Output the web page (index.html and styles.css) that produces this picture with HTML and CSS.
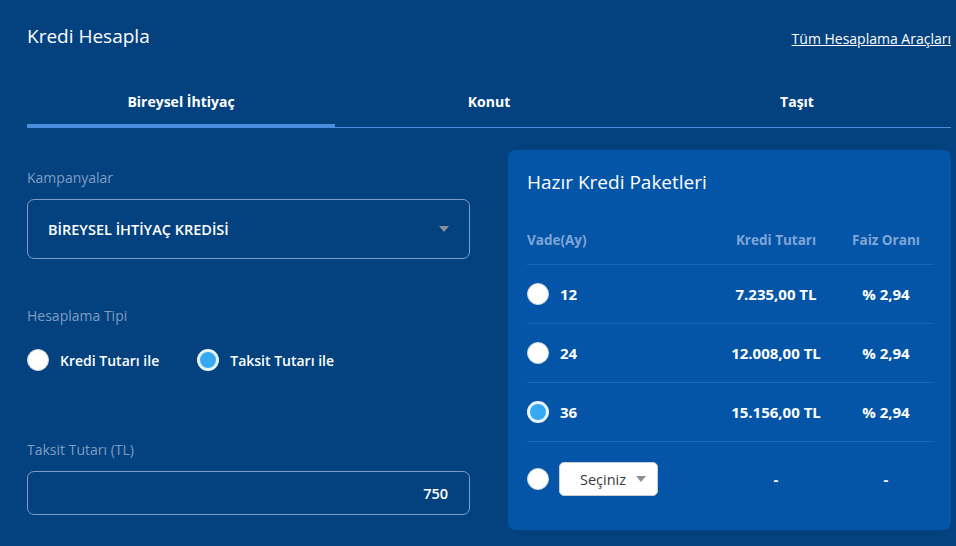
FILE: index.html
```html
<!DOCTYPE html>
<html lang="tr">
<head>
  <meta charset="UTF-8" />
  <meta name="viewport" content="width=device-width, initial-scale=1.0"/>
  <title>Kredi Hesapla</title>
  <link rel="stylesheet" href="styles.css">
</head>
<body>

  <div class="wrap">
    <!-- Header -->
    <header>
      <div class="title">Kredi Hesapla</div>
      <a href="#" class="all-tools">Tüm Hesaplama Araçları</a>
    </header>

    <!-- Tabs -->
    <div class="tabs">
      <div class="tab active">Bireysel İhtiyaç</div>
      <div class="tab">Konut</div>
      <div class="tab">Taşıt</div>
    </div>

    <main class="calc">
      <!-- Form -->
      <section class="form">
        <div class="label first">Kampanyalar</div>
        <div class="select-box">
          <span>BİREYSEL İHTİYAÇ KREDİSİ</span>
          <span class="caret"></span>
        </div>

        <div class="label type-label">Hesaplama Tipi</div>
        <div class="radio-group">
          <label class="radio-item"><span class="radio"></span>Kredi Tutarı ile</label>
          <label class="radio-item"><span class="radio checked"></span>Taksit Tutarı ile</label>
        </div>

        <div class="label amount-label">Taksit Tutarı (TL)</div>
        <div class="amount-box">750</div>
      </section>

      <!-- Packages -->
      <section class="packages">
        <h2>Hazır Kredi Paketleri</h2>
        <div class="pk-row pk-head">
          <div>Vade(Ay)</div>
          <div class="c">Kredi Tutarı</div>
          <div class="c">Faiz Oranı</div>
        </div>
        <div class="pk-row">
          <div class="term"><span class="radio"></span>12</div>
          <div class="c">7.235,00 TL</div>
          <div class="c">% 2,94</div>
        </div>
        <div class="pk-row">
          <div class="term"><span class="radio"></span>24</div>
          <div class="c">12.008,00 TL</div>
          <div class="c">% 2,94</div>
        </div>
        <div class="pk-row">
          <div class="term"><span class="radio checked"></span>36</div>
          <div class="c">15.156,00 TL</div>
          <div class="c">% 2,94</div>
        </div>
        <div class="pk-row last">
          <div class="term"><span class="radio"></span>
            <div class="mini-select">Seçiniz <span class="caret"></span></div>
          </div>
          <div class="c">-</div>
          <div class="c">-</div>
        </div>
      </section>
    </main>
  </div>

</body>
</html>
```

FILE: styles.css
```css
* { box-sizing: border-box; margin: 0; padding: 0; }
body {
  font-family: 'Open Sans', 'Noto Sans', sans-serif;
  background: #03427f;
  color: #fff;
}

.wrap {
  padding: 0 5px 0 27px;
}

header {
  display: flex;
  justify-content: space-between;
  align-items: flex-end;
  padding-top: 24px;
}

.title {
  font-size: 19px;
  line-height: 24px;
}

.all-tools {
  color: #fff;
  font-size: 14px;
  line-height: 18px;
  text-decoration: underline;
  margin-bottom: 0;
}

.tabs {
  display: flex;
  margin-top: 39px;
  border-bottom: 1px solid #4a8ee0;
}

.tab {
  flex: 1;
  text-align: center;
  font-size: 14px;
  font-weight: 700;
  line-height: 18px;
  padding: 6px 0 13px;
  border-bottom: 4px solid transparent;
  margin-bottom: -1px;
}

.tab.active {
  border-bottom-color: #4a8ee0;
}

.calc {
  display: grid;
  grid-template-columns: 1fr 1fr;
  gap: 38px;
  margin-top: 22px;
}

.label {
  font-size: 14px;
  line-height: 20px;
  color: #7f9dc4;
}
.label.first { padding-top: 18px; }
.label.type-label { margin-top: 47px; }
.label.amount-label { margin-top: 69px; }

.select-box {
  margin-top: 11px;
  height: 60px;
  border: 1px solid #7d9cc6;
  border-radius: 7px;
  display: flex;
  align-items: center;
  justify-content: space-between;
  padding: 0 20px 0 20px;
  font-size: 14.5px;
  font-weight: 600;
}

.caret {
  width: 0;
  height: 0;
  border-left: 5px solid transparent;
  border-right: 5px solid transparent;
  border-top: 6px solid #8b8f96;
}

.radio-group {
  display: flex;
  gap: 38px;
  margin-top: 23px;
}

.radio-item {
  display: flex;
  align-items: center;
  gap: 11px;
  font-size: 14px;
  font-weight: 600;
}

.radio {
  width: 22px;
  height: 22px;
  border-radius: 50%;
  background: #fff;
  border: 1px solid #cfd6de;
  flex-shrink: 0;
}

.radio.checked {
  background: #35a9f3;
  border: 3px solid #e8f4fd;
}

.amount-box {
  margin-top: 11px;
  height: 44px;
  border: 1px solid #7d9cc6;
  border-radius: 7px;
  display: flex;
  align-items: center;
  justify-content: flex-end;
  padding-right: 21px;
  font-size: 14.5px;
  font-weight: 600;
}

.packages {
  background: #0455a8;
  border-radius: 8px;
  padding: 20px 18px 34px 19px;
}

.packages h2 {
  font-size: 19px;
  font-weight: 400;
  line-height: 24px;
}

.pk-row {
  display: grid;
  grid-template-columns: 1fr 126px 94px;
  align-items: center;
  height: 59px;
  border-bottom: 1px solid #1d68b5;
  font-size: 15px;
  font-weight: 700;
}

.pk-row .c { text-align: center; }

.pk-head {
  margin-top: 22px;
  height: 49px;
  font-size: 13.5px;
  color: #80a6d6;
}

.pk-row.last {
  border-bottom: none;
  height: auto;
  padding-top: 20px;
}

.term {
  display: flex;
  align-items: center;
  gap: 11px;
}

.mini-select {
  width: 99px;
  height: 34px;
  background: #fff;
  border: 1px solid #c9ced4;
  border-radius: 5px;
  color: #3a3a3a;
  font-size: 14.5px;
  font-weight: 400;
  display: flex;
  align-items: center;
  gap: 10px;
  padding-left: 20px;
  margin-left: -1px;
}
```
